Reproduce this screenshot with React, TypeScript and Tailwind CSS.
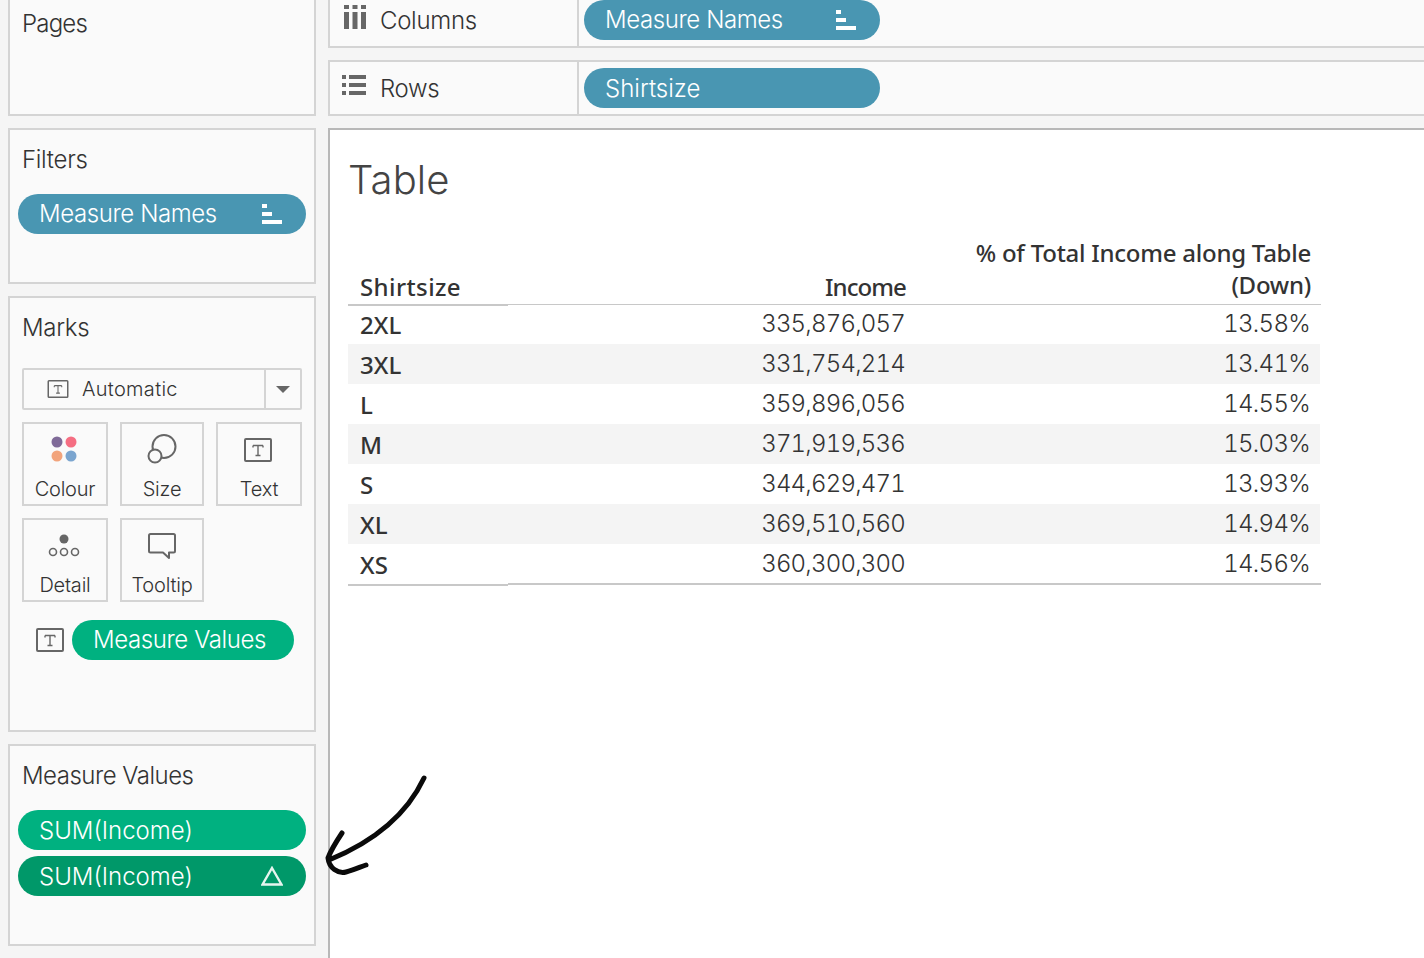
import React from 'react';

const rows = [
  ['2XL', '335,876,057', '13.58%'],
  ['3XL', '331,754,214', '13.41%'],
  ['L', '359,896,056', '14.55%'],
  ['M', '371,919,536', '15.03%'],
  ['S', '344,629,471', '13.93%'],
  ['XL', '369,510,560', '14.94%'],
  ['XS', '360,300,300', '14.56%'],
];

const SortIcon = () => (
  <svg width="20" height="20" viewBox="0 0 20 20" className="fill-white">
    <rect x="0" y="0" width="5" height="4" />
    <rect x="0" y="8" width="10" height="4" />
    <rect x="0" y="16" width="20" height="4" />
  </svg>
);

const TIcon = ({ w = 24, h = 20 }: { w?: number; h?: number }) => (
  <svg width={w} height={h} viewBox="0 0 28 24" fill="none">
    <rect x="1" y="1" width="26" height="22" rx="1" stroke="#666" strokeWidth="2" />
    <path d="M9 7.5h10M14 7.5v10M11.5 17.5h5M9 7.5v2M19 7.5v2" stroke="#666" strokeWidth="1.4" />
  </svg>
);

const Pill = ({ label, color, icon, tight }: { label: string; color: string; icon?: React.ReactNode; tight?: boolean }) => (
  <div className={`h-10 rounded-full flex items-center justify-between pl-[21px] pr-6 text-white text-[24px] font-light whitespace-nowrap ${color}`}>
    <span className={tight ? 'tracking-[-0.4px]' : 'pt-[2px]'}>{label}</span>
    {icon}
  </div>
);

const MarkCard = ({ label, icon }: { label: string; icon: React.ReactNode }) => (
  <div className="h-[84px] border-2 border-[#d4d4d4] flex flex-col items-center">
    <div className="h-[52px] flex items-center justify-center shrink-0">{icon}</div>
    <span className="text-[20px] leading-[26px] font-light text-[#333] tracking-[-0.2px]">{label}</span>
  </div>
);

const Panel = ({ title, className, titleClass, children }: { title: string; className: string; titleClass?: string; children?: React.ReactNode }) => (
  <div className={`border-2 border-[#d4d4d4] bg-[#fafafa] px-2 shrink-0 ${className}`}>
    <div className={`pl-1 text-[24px] font-light text-[#333] leading-8 ${titleClass ?? 'tracking-[-0.3px]'}`}>{title}</div>
    {children}
  </div>
);

const Shelf = ({ label, icon, pill, className, pillClass, labelClass }: { label: string; icon: React.ReactNode; pill: React.ReactNode; className: string; pillClass: string; labelClass: string }) => (
  <div className={`flex border-2 border-r-0 border-[#d4d4d4] bg-[#fafafa] ${className}`}>
    <div className="w-[249px] border-r-2 border-[#d4d4d4] flex items-center shrink-0">
      <div className="w-[50px] flex justify-center shrink-0">{icon}</div>
      <span className={`text-[24px] font-light text-[#333] tracking-[-0.3px] ${labelClass}`}>{label}</span>
    </div>
    <div className={`w-[296px] ml-[5px] ${pillClass}`}>{pill}</div>
  </div>
);

export default function App() {
  return (
    <div className="relative h-[958px] w-[1424px] overflow-hidden bg-[#f5f5f5] flex font-['Inter',sans-serif]">
      {/* Left cards */}
      <div className="w-[308px] ml-2 mr-3 flex flex-col gap-3 shrink-0">
        <Panel title="Pages" titleClass="tracking-[-0.8px]" className="h-[116px] border-t-0 pt-[8px]" />
        <Panel title="Filters" className="h-[156px] pt-[14px]">
          <div className="mt-[18px]">
            <Pill label="Measure Names" color="bg-[#4996b2]" icon={<SortIcon />} tight />
          </div>
        </Panel>
        <Panel title="Marks" className="h-[436px] pt-[14px]">
          <div className="px-[4px] mt-[24px]">
            <div className="h-[42px] border-2 border-[#d4d4d4] rounded-[2px] flex items-center">
              <div className="flex-1 flex items-center pl-[23px] gap-[13px]">
                <TIcon w={22} h={18} />
                <span className="text-[20px] font-light text-[#333] tracking-[0.3px]">Automatic</span>
              </div>
              <div className="w-9 h-full border-l-2 border-[#d4d4d4] flex items-center justify-center">
                <div className="w-0 h-0 border-l-[7px] border-r-[7px] border-t-[7px] border-l-transparent border-r-transparent border-t-[#666]" />
              </div>
            </div>
            <div className="grid grid-cols-[86px_84px_86px] gap-x-[12px] gap-y-[12px] mt-[12px]">
              <MarkCard
                label="Colour"
                icon={
                  <svg width="26" height="26" viewBox="0 0 26 26" className="-ml-[2px] -mt-[2px]">
                    <circle cx="6" cy="6" r="5.5" fill="#7f6a98" />
                    <circle cx="20" cy="6" r="5.5" fill="#f56e82" />
                    <circle cx="6" cy="20" r="5.5" fill="#f2a47c" />
                    <circle cx="20" cy="20" r="5.5" fill="#7ba5cf" />
                  </svg>
                }
              />
              <MarkCard
                label="Size"
                icon={
                  <svg width="30" height="30" viewBox="0 0 30 30" fill="none" stroke="#666" strokeWidth="2" className="-mt-[2px]">
                    <circle cx="17" cy="12.5" r="11.5" />
                    <circle cx="8" cy="22" r="6.5" fill="#fafafa" />
                  </svg>
                }
              />
              <MarkCard label="Text" icon={<div className="-ml-[2px]"><TIcon w={28} h={24} /></div>} />
              <MarkCard
                label="Detail"
                icon={
                  <svg width="32" height="24" viewBox="0 0 32 24" fill="none" className="-ml-[2px]">
                    <circle cx="16" cy="5" r="4.5" fill="#666" />
                    <circle cx="5" cy="18" r="3.5" stroke="#666" strokeWidth="1.6" />
                    <circle cx="16" cy="18" r="3.5" stroke="#666" strokeWidth="1.6" />
                    <circle cx="27" cy="18" r="3.5" stroke="#666" strokeWidth="1.6" />
                  </svg>
                }
              />
              <MarkCard
                label="Tooltip"
                icon={
                  <svg width="28" height="26" viewBox="0 0 28 26" fill="none">
                    <path d="M2.5 1h23a1.5 1.5 0 0 1 1.5 1.5V18a1.5 1.5 0 0 1-1.5 1.5H21V25l-6-5.5H2.5A1.5 1.5 0 0 1 1 18V2.5A1.5 1.5 0 0 1 2.5 1z" stroke="#666" strokeWidth="2" strokeLinejoin="round" />
                  </svg>
                }
              />
            </div>
            <div className="flex items-center mt-[18px] ml-[14px] gap-2">
              <TIcon w={28} h={24} />
              <div className="w-[222px]">
                <Pill label="Measure Values" color="bg-[#00b180]" tight />
              </div>
            </div>
          </div>
        </Panel>
        <Panel title="Measure Values" titleClass="tracking-[-0.5px]" className="h-[202px] pt-[14px]">
          <div className="mt-[18px] flex flex-col gap-[6px]">
            <Pill label="SUM(Income)" color="bg-[#00b180]" />
            <Pill
              label="SUM(Income)"
              color="bg-[#009869]"
              icon={
                <svg width="22" height="20" viewBox="0 0 22 20" fill="none" className="-mr-[1px]">
                  <path d="M11 2L20.5 18.5H1.5z" stroke="#e6f5ef" strokeWidth="2.4" />
                </svg>
              }
            />
          </div>
        </Panel>
      </div>

      {/* Shelves and view */}
      <div className="flex-1 flex flex-col gap-3 min-w-0">
        <Shelf
          label="Columns"
          className="h-[48px] border-t-0"
          labelClass="-mt-[4px]"
          pillClass=""
          icon={
            <svg width="22" height="24" viewBox="0 0 22 24" className="fill-[#666] -mt-[12px]">
              <rect x="0" y="0" width="5" height="4" />
              <rect x="8.5" y="0" width="5" height="4" />
              <rect x="17" y="0" width="5" height="4" />
              <rect x="0" y="7" width="5" height="17" />
              <rect x="8.5" y="7" width="5" height="17" />
              <rect x="17" y="7" width="5" height="17" />
            </svg>
          }
          pill={<Pill label="Measure Names" color="bg-[#4996b2]" icon={<SortIcon />} tight />}
        />
        <Shelf
          label="Rows"
          className="h-[56px]"
          labelClass="mt-[2px]"
          pillClass="pt-[6px]"
          icon={
            <svg width="24" height="20" viewBox="0 0 24 20" className="fill-[#666] -mt-[6px] -ml-[2px]">
              <rect x="0" y="0" width="4" height="4" />
              <rect x="7" y="0" width="17" height="4" />
              <rect x="0" y="8" width="4" height="4" />
              <rect x="7" y="8" width="17" height="4" />
              <rect x="0" y="16" width="4" height="4" />
              <rect x="7" y="16" width="17" height="4" />
            </svg>
          }
          pill={<Pill label="Shirtsize" color="bg-[#4996b2]" />}
        />
        <div className="flex-1 border-t-2 border-l-2 border-[#b8b8b8] bg-white pl-[18px]">
          <div className="text-[40px] leading-[50px] font-light text-[#444] mt-[25px] tracking-[0.1px]">Table</div>

          <div className="w-[973px] mt-[30px]">
            {/* Header */}
            <div className="grid grid-cols-[160px_398px_1fr] h-[69px] pb-[3px] items-end text-[#333] text-[24px] leading-8 font-['Noto_Sans',sans-serif] font-medium">
              <span className="pl-3 tracking-[0.4px] translate-y-[2px]">Shirtsize</span>
              <span className="text-right tracking-[-0.9px] translate-y-[2px]">Income</span>
              <span className="text-right pr-[10px] tracking-[-0.25px]">
                % of Total Income along Table
                <br />
                (Down)
              </span>
            </div>
            <div className="flex h-px overflow-visible">
              <div className="w-[160px] h-[2px] bg-[#c8c8c8]" />
              <div className="flex-1 h-px bg-[#c8c8c8]" />
            </div>
            {/* Rows */}
            <div className="-mt-px w-[972px]">
              {rows.map((r, i) => (
                <div
                  key={r[0]}
                  className={`grid grid-cols-[160px_397px_1fr] h-10 items-center text-[24px] text-[#333] ${i % 2 === 1 ? 'bg-[#f4f4f4]' : ''}`}
                >
                  <span className="pl-3 font-medium font-['Noto_Sans',sans-serif] translate-y-[1px]">{r[0]}</span>
                  <span className="text-right font-light tabular-nums tracking-[-0.8px]">{r[1]}</span>
                  <span className="text-right font-light tabular-nums tracking-[-0.7px] pr-[10px]">{r[2]}</span>
                </div>
              ))}
            </div>
            <div className="flex -mt-px">
              <div className="w-[160px] h-[2px] mt-px bg-[#c8c8c8]" />
              <div className="flex-1 h-[2px] bg-[#c8c8c8]" />
            </div>
          </div>
        </div>
      </div>

      {/* Hand-drawn arrow annotation */}
      <svg className="absolute left-0 top-0 pointer-events-none" width="1424" height="958" fill="none">
        <path
          d="M424 778C408 812 378 840 329 860M342 833C336 842 331 850 328 858C329 868 338 874 346 872C354 870 360 867 366 865"
          stroke="#0a0a0a"
          strokeWidth="5"
          strokeLinecap="round"
          strokeLinejoin="round"
        />
      </svg>
    </div>
  );
}
